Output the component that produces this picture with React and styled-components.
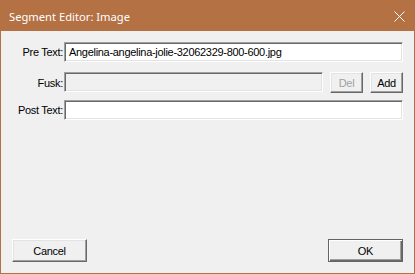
import React from "react";
import styled, { createGlobalStyle } from "styled-components";

const Global = createGlobalStyle`
  html, body {
    margin: 0;
    padding: 0;
    background: #f0f0f0;
  }
  * {
    box-sizing: border-box;
  }
`;

const Window = styled.div`
  width: 415px;
  height: 274px;
  border: 1px solid #b37144;
  border-top: none;
  background: #f0f0f0;
  display: flex;
  flex-direction: column;
  font-family: "Liberation Sans", Arial, sans-serif;
  font-size: 11px;
  letter-spacing: -0.3px;
  color: #000;
`;

const TitleBar = styled.div`
  height: 31px;
  margin: 0 -1px;
  background: #b37144;
  color: #fff;
  display: flex;
  align-items: center;
  justify-content: space-between;
  padding: 1px 10px 0 9px;
  font-family: "Noto Sans", "Open Sans", sans-serif;
  font-size: 11.2px;
  letter-spacing: 0;
`;

const Close = styled.svg`
  width: 11px;
  height: 11px;
  display: block;
`;

const Body = styled.div`
  flex: 1;
  display: flex;
  flex-direction: column;
  padding: 11px;
`;

const Form = styled.div`
  display: grid;
  grid-template-columns: 51px 1fr;
  column-gap: 1px;
  align-items: center;
`;

const Label = styled.label`
  text-align: right;
  white-space: nowrap;
  margin-top: ${(p) => p.top || 0}px;
`;

const Row = styled.div`
  display: flex;
  gap: 7px;
  margin-top: ${(p) => p.top || 0}px;
`;

const Field = styled.div`
  flex: 1;
  height: 20px;
  background: ${(p) => (p.disabled ? "#f0f0f0" : "#fff")};
  border-style: solid;
  border-width: 1px;
  border-color: #a0a0a0 #fff #fff #a0a0a0;
  box-shadow: inset 1px 1px 0 #696969, inset -1px -1px 0 #e3e3e3;
  padding: 0 4px;
  display: flex;
  align-items: center;
  white-space: nowrap;
  overflow: hidden;
`;

const Button = styled.button`
  width: ${(p) => p.w}px;
  height: ${(p) => p.h}px;
  padding: 0;
  margin: 0;
  font: inherit;
  letter-spacing: inherit;
  background: #f0f0f0;
  color: ${(p) => (p.disabled ? "#a0a0a0" : "#000")};
  border-style: solid;
  border-width: 1px;
  border-color: ${(p) =>
    p.primary ? "#646464" : "#fff #696969 #696969 #fff"};
  box-shadow: ${(p) =>
    p.primary
      ? "inset 1px 1px 0 #fff, inset -1px -1px 0 #696969, inset -2px -2px 0 #a0a0a0"
      : "inset -1px -1px 0 #a0a0a0, inset 1px 1px 0 #e3e3e3"};
  border-radius: 0;
`;

const Footer = styled.div`
  margin-top: auto;
  display: flex;
  justify-content: space-between;
`;

export default function App() {
  return (
    <>
      <Global />
      <Window>
        <TitleBar>
          <span>Segment Editor: Image</span>
          <Close viewBox="0 0 11 11">
            <path d="M0.5 0.5 L10.5 10.5 M10.5 0.5 L0.5 10.5" stroke="#fff" strokeWidth="1" />
          </Close>
        </TitleBar>
        <Body>
          <Form>
            <Label>Pre Text:</Label>
            <Row>
              <Field>Angelina-angelina-jolie-32062329-800-600.jpg</Field>
            </Row>
            <Label top={10}>Fusk:</Label>
            <Row top={10}>
              <Field disabled />
              <Button w={33} h={21} disabled>
                Del
              </Button>
              <Button w={33} h={21}>
                Add
              </Button>
            </Row>
            <Label top={7}>Post Text:</Label>
            <Row top={7}>
              <Field />
            </Row>
          </Form>
          <Footer>
            <Button w={75} h={23}>
              Cancel
            </Button>
            <Button w={75} h={23} primary>
              OK
            </Button>
          </Footer>
        </Body>
      </Window>
    </>
  );
}
